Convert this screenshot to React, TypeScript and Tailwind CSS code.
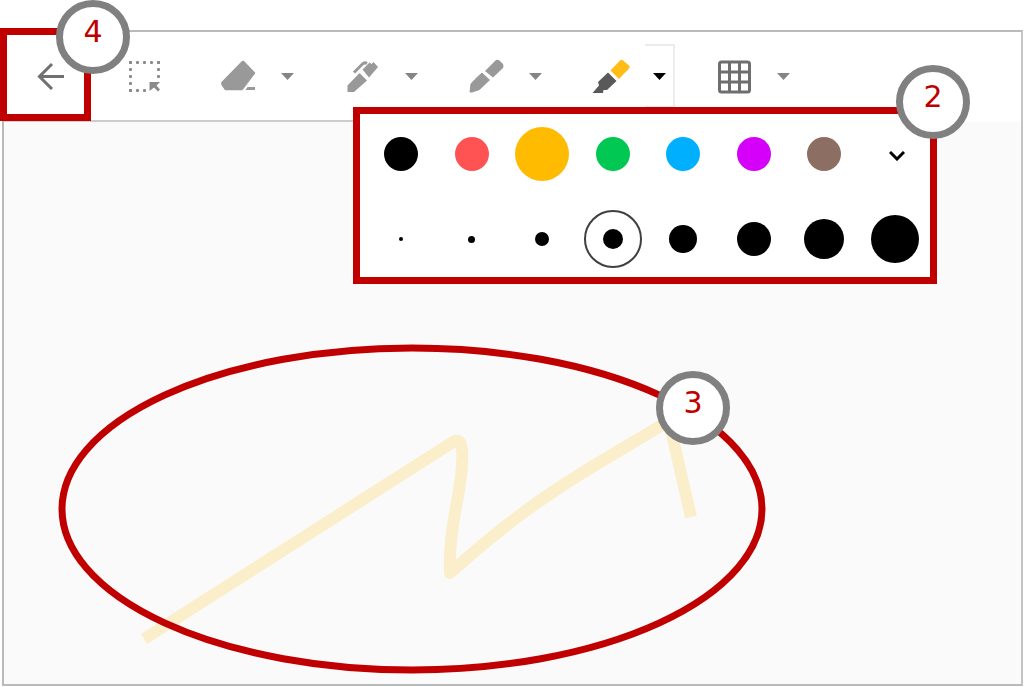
import type { ReactNode } from 'react'
import { clsx } from 'clsx'

const COLORS = [
  { name: 'Black', className: 'size-[34px] bg-black' },
  { name: 'Red', className: 'size-[34px] bg-[#ff5252]' },
  { name: 'Yellow', className: 'size-[54px] bg-[#ffbb00]' },
  { name: 'Green', className: 'size-[34px] bg-[#00c853]' },
  { name: 'Blue', className: 'size-[34px] bg-[#00b0ff]' },
  { name: 'Purple', className: 'size-[34px] bg-[#d500f9]' },
  { name: 'Brown', className: 'size-[34px] bg-[#8d6e63]' },
]

const SIZES = [
  'size-1',
  'size-[7px]',
  'size-[14px]',
  'size-5',
  'size-7',
  'size-[34px]',
  'size-10',
  'size-12',
]

export default function App() {
  return (
    <div className="relative flex min-h-screen flex-col bg-white pt-[30px] pr-px pb-px pl-0.5 font-['DejaVu_Sans',sans-serif]">
      <div className="flex flex-1 flex-col border-2 border-[#bababa] border-r-[#c4c4c4]">
        <Toolbar />
        <Canvas />
      </div>

      <div className="pointer-events-none absolute top-7 left-0 h-[93px] w-[91px] border-[7px] border-[#c00000]" />
      <BrushMenu />

      <Callout className="top-0 left-14">4</Callout>
      <Callout className="top-[65px] left-[896px]">2</Callout>
      <Callout className="top-[371px] left-[656px]">3</Callout>
    </div>
  )
}

function Toolbar() {
  return (
    <header className="flex h-[90px] bg-white text-[#999999]">
      {/* the rule only runs as far as the open brush menu */}
      <div className="flex items-center border-b-2 border-[#cccccc]">
        <button type="button" aria-label="Back" className="flex h-16 w-[93px] items-center justify-center text-[#707070]">
          <svg width="28" height="28" viewBox="0 0 28 28" fill="none" stroke="currentColor" strokeWidth="3">
            <path d="M27 14.500H3M15 2 2.500 14.500 15 27" />
          </svg>
        </button>
        <button type="button" aria-label="Select" className="flex h-16 w-24 items-center justify-center text-[#8a8a8a]">
          <SelectIcon />
        </button>
        <div className="ml-2 flex gap-[22px]">
          <Tool label="Eraser">
            <path d="M26.500 5.500 37.500 17 25 33.500H8.500L5 28.500 5 26.500 25 6Z" stroke="currentColor" strokeWidth="1.500" strokeLinejoin="round" />
            <path d="M30.500 31H38v3H28.500Z" />
          </Tool>
          <Tool label="Pen">
            <path d="M6.500 36V29.500L18.500 17 26 24.500 13 36Z" />
            <path d="M21.500 13.500 28.500 6.500 30.500 8 32.500 6 37 11 28 21.500Z" />
            <path d="M13 16.500 21.500 8Q23.500 6 26 7.500" fill="none" stroke="currentColor" strokeWidth="3" />
          </Tool>
        </div>
      </div>
      <div className="ml-[22px] flex items-center gap-[22px] pb-0.5">
        <Tool label="Marker">
          <path d="M5 36 6 28Q8 25 17 17l7.500 7-10 9.500L7 36Z" stroke="currentColor" strokeLinejoin="round" />
          <path d="M20 15 31 4q2-1 4 1l3 3q1 2 0 4L28 21.500Z" />
        </Tool>
        <Tool label="Highlighter" active>
          <path d="M3.500 37 10 29.500 9 26 19 16.500 27.500 25 18 34 14.500 34 14 37Z" className="fill-[#595959]" />
          <path d="M21.500 14.500 31 4.500q1.500-1.500 3 0L40 9.500q1.500 1.500 0 3L30 23Z" className="fill-[#ffbd16]" />
        </Tool>
        <Tool label="Grid">
          <g fill="none" className="stroke-[#6e6e6e]" strokeWidth="3">
            <rect x="6.500" y="6" width="30" height="30" rx="2" />
            <path d="M16.500 6v30M26.500 6v30M6.500 16h30M6.500 26h30" />
          </g>
        </Tool>
      </div>
    </header>
  )
}

function Tool({ label, active = false, children }: { label: string; active?: boolean; children: ReactNode }) {
  return (
    <div className="flex">
      <button type="button" aria-label={label} className="flex h-16 w-[72px] items-center justify-center">
        <svg width="40" height="40" viewBox="0 0 40 40" fill="currentColor" className="overflow-visible">
          {children}
        </svg>
      </button>
      <button
        type="button"
        aria-label={`${label} options`}
        aria-expanded={active}
        className={clsx(
          'flex h-16 w-[30px] items-center justify-center',
          active ? 'border-y-2 border-r-2 border-[#ececec] text-black' : 'pr-0.5 text-[#858585]',
        )}
      >
        <svg width="13" height="7" viewBox="0 0 13 7" fill="currentColor">
          <path d="M0 0h13L6.500 7Z" />
        </svg>
      </button>
    </div>
  )
}

function SelectIcon() {
  const marks = [0, 7, 14, 21, 28]

  return (
    <svg width="32" height="32" viewBox="0 0 32 32" fill="currentColor">
      {marks.map((m) => (
        <g key={m}>
          <rect x={m} y="1" width="3" height="3" rx="1" />
          <rect x="0" y={m + 1} width="3" height="3" rx="1" />
          {m < 21 ? <rect x="28" y={m + 1} width="3" height="3" rx="1" /> : null}
          {m < 21 ? <rect x={m} y="29" width="3" height="3" rx="1" /> : null}
        </g>
      ))}
      <path d="M20.500 22H31l-3.500 3.500 3.500 4-2 2-4-4-4.500 3.500Z" />
    </svg>
  )
}

function BrushMenu() {
  return (
    <div className="absolute top-[107px] left-[353px] w-[584px] border-[7px] border-[#c00000] bg-white pl-1.5">
      <div role="radiogroup" aria-label="Color" className="grid h-20 grid-cols-8 place-items-center">
        {COLORS.map((color) => (
          <input
            key={color.name}
            type="radio"
            name="color"
            aria-label={color.name}
            defaultChecked={color.name === 'Yellow'}
            className={clsx('appearance-none rounded-full', color.className)}
          />
        ))}
        <button type="button" aria-label="More colors" className="flex size-8 items-center justify-center pt-1 pl-1">
          <svg width="16" height="10" viewBox="0 0 16 10" fill="none" stroke="black" strokeWidth="3">
            <path d="M1 1 8 8l7-7" />
          </svg>
        </button>
      </div>
      <div role="radiogroup" aria-label="Thickness" className="mt-[7px] grid h-[76px] grid-cols-8 place-items-center">
        {SIZES.map((size, index) => (
          <label
            key={size}
            className={clsx(
              'flex size-[58px] items-center justify-center rounded-full',
              index === 3 && 'border-2 border-[#404040]',
            )}
          >
            <input
              type="radio"
              name="thickness"
              aria-label={`Thickness ${index + 1}`}
              defaultChecked={index === 3}
              className={clsx('appearance-none rounded-full bg-black', size)}
            />
          </label>
        ))}
      </div>
    </div>
  )
}

function Canvas() {
  return (
    <main className="flex flex-1 bg-[#fafafa]">
      <svg className="min-h-[560px] flex-1" fill="none" aria-label="Drawing">
        <path
          d="M140 517 449 320Q460 313 458 342C457 372 444 408 446 451C500 403 536 376 596 340L665 299 687 395"
          stroke="#fbeecb"
          strokeWidth="12"
          strokeLinejoin="round"
        />
        <ellipse cx="408" cy="387" rx="350" ry="161" stroke="#c00000" strokeWidth="7" />
      </svg>
    </main>
  )
}

function Callout({ className, children }: { className: string; children: ReactNode }) {
  return (
    <div
      className={clsx(
        'absolute flex size-[74px] items-center justify-center rounded-full border-[7px] border-[#808080] bg-white pb-2.5 text-[30px] leading-none text-[#c00000]',
        className,
      )}
    >
      {children}
    </div>
  )
}
